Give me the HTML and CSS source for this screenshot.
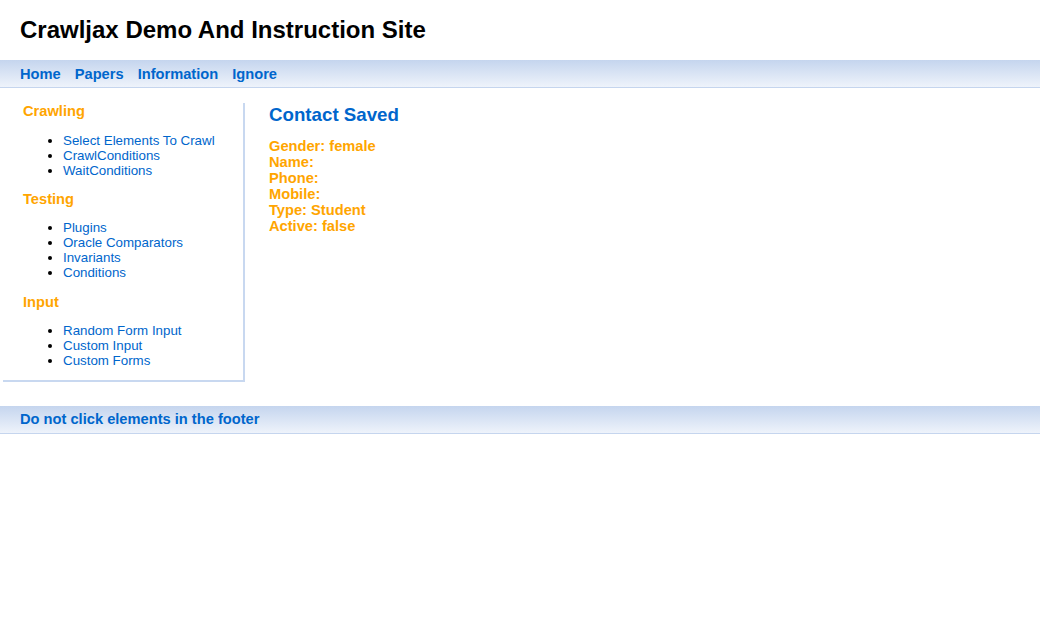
FILE: index.html
```html
<!DOCTYPE html>
<html>
<head>
<meta charset="utf-8">
<title>Crawljax Demo And Instruction Site</title>
<link rel="stylesheet" href="styles.css">
</head>
<body>
<header class="header">
  <h1 class="title">Crawljax Demo And Instruction Site</h1>
</header>
<nav class="bar nav">
  <a href="#">Home</a>
  <a href="#">Papers</a>
  <a href="#">Information</a>
  <a href="#">Ignore</a>
</nav>
<div class="content">
  <aside class="sidebar">
    <h2 class="side-head">Crawling</h2>
    <ul class="side-list">
      <li><a href="#">Select Elements To Crawl</a></li>
      <li><a href="#">CrawlConditions</a></li>
      <li><a href="#">WaitConditions</a></li>
    </ul>
    <h2 class="side-head">Testing</h2>
    <ul class="side-list">
      <li><a href="#">Plugins</a></li>
      <li><a href="#">Oracle Comparators</a></li>
      <li><a href="#">Invariants</a></li>
      <li><a href="#">Conditions</a></li>
    </ul>
    <h2 class="side-head">Input</h2>
    <ul class="side-list">
      <li><a href="#">Random Form Input</a></li>
      <li><a href="#">Custom Input</a></li>
      <li><a href="#">Custom Forms</a></li>
    </ul>
  </aside>
  <main class="main">
    <h3 class="main-title">Contact Saved</h3>
    <div class="details">
      <div>Gender: female</div>
      <div>Name: </div>
      <div>Phone: </div>
      <div>Mobile: </div>
      <div>Type: Student</div>
      <div>Active: false</div>
    </div>
  </main>
</div>
<footer class="bar footer">
  <span>Do not click elements in the footer</span>
</footer>
</body>
</html>
```
FILE: styles.css
```css
html, body {
  margin: 0;
  padding: 0;
  background: #ffffff;
  font-family: "Liberation Sans", Arial, sans-serif;
}
a {
  color: #0066cc;
  text-decoration: none;
}
.header {
  height: 60px;
  display: flex;
  align-items: center;
  padding-left: 20px;
}
.title {
  margin: 0;
  font-size: 24px;
  font-weight: bold;
  color: #000;
  line-height: 28px;
}
.bar {
  height: 27px;
  border-bottom: 1px solid #c5d5ee;
  background: linear-gradient(to bottom, #c5d5ee 0%, #eef3fb 100%);
  display: flex;
  align-items: center;
  padding-left: 20px;
  font-size: 14.67px;
  font-weight: bold;
  color: #0066cc;
}
.nav {
  gap: 14px;
}
.content {
  display: flex;
  align-items: flex-start;
  padding-top: 15px;
  padding-left: 3px;
}
.sidebar {
  width: 220px;
  padding: 0 0 0 20px;
  border-right: 2px solid #c8d8f0;
  border-bottom: 2px solid #c8d8f0;
}
.side-head {
  margin: 0;
  font-size: 14.67px;
  line-height: 16px;
  font-weight: bold;
  color: #ffa500;
}
.side-list {
  margin: 13.5px 0 13.33px;
  padding-left: 40px;
  font-size: 13.33px;
  line-height: 15px;
}
.side-list:last-child {
  margin-bottom: 12.2px;
}
.main {
  margin-left: 24px;
  padding-top: 1px;
}
.main-title {
  margin: 0;
  font-size: 18.72px;
  line-height: 22px;
  font-weight: bold;
  color: #0066cc;
}
.details {
  margin-top: 12px;
  font-size: 14.67px;
  line-height: 16px;
  font-weight: bold;
  color: #ffa500;
}
.footer {
  margin-top: 23.5px;
}
```
